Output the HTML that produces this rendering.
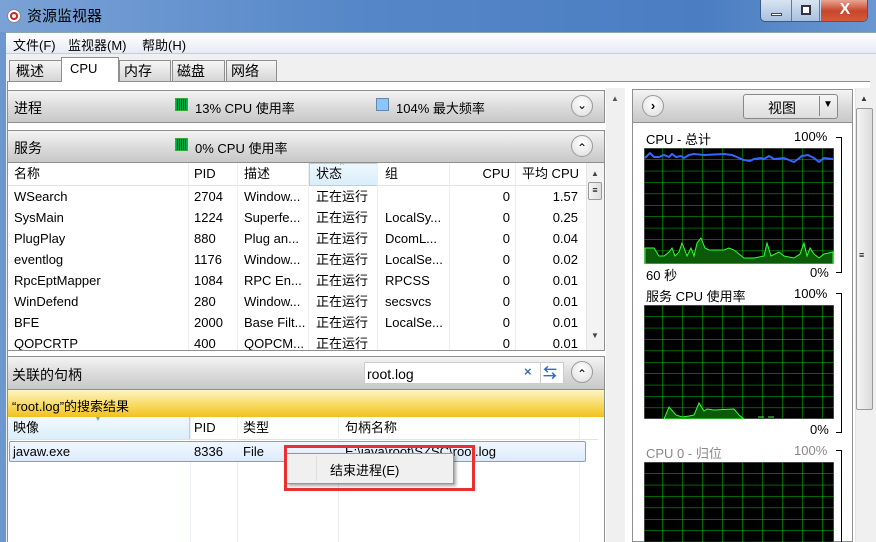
<!DOCTYPE html>
<html><head><meta charset="utf-8"><style>
*{margin:0;padding:0;box-sizing:border-box}
html,body{width:876px;height:542px;overflow:hidden}
body{position:relative;font-family:"Liberation Sans","Noto Sans CJK SC",sans-serif;font-size:13px;color:#000;background:#f0f0f0}
.a{position:absolute}
.hdr{background:linear-gradient(#f4f4f4,#dcdcdc 50%,#c8c8c8);border:1px solid #8e8f8f}
.circ{width:22px;height:22px;border-radius:50%;border:1px solid #9a9a9a;background:radial-gradient(circle at 50% 35%,#fff,#ddd);}
.t{white-space:nowrap}
.row{position:absolute;left:0;height:21px;line-height:21px;width:580px}
.row span{position:absolute}
.r{text-align:right}
</style></head><body>
<!-- title bar -->
<div class="a" style="left:0;top:0;width:876px;height:32px;background:linear-gradient(90deg,#7aa2d6,#5687c8 40%,#4a7dc2 80%,#6a97d0)"></div>
<div class="a" style="left:7px;top:9px;width:14px;height:14px;border-radius:50%;background:#fff;border:1px solid #888"><div class="a" style="left:2px;top:2px;width:8px;height:8px;border-radius:50%;border:2px solid #c22"></div></div>
<div class="a t" style="left:27px;top:5px;font-size:15px;color:#000">资源监视器</div>
<div class="a" style="left:760px;top:0;width:108px;height:22px;border:1px solid #3a5a8a;border-top:none;border-radius:0 0 5px 5px;background:linear-gradient(#d8e4f2,#a9c0de);overflow:hidden">
 <div class="a" style="left:0;top:0;width:31px;height:22px;border-right:1px solid #5a7aa8"><div class="a" style="left:10px;top:13px;width:11px;height:3px;background:#fff;border:1px solid #445"></div></div>
 <div class="a" style="left:31px;top:0;width:28px;height:22px;border-right:1px solid #5a7aa8"><div class="a" style="left:9px;top:5px;width:10px;height:10px;border:2px solid #334;background:#fff"></div></div>
 <div class="a" style="left:60px;top:0;width:48px;height:22px;background:linear-gradient(#e8a493,#c8452b 50%,#d85a3a);color:#fff;font-weight:bold;font-size:16px;text-align:center;line-height:20px">X</div>
</div>
<!-- window body frame -->
<div class="a" style="left:0;top:32px;width:6px;height:510px;background:#6d97cf"></div>
<div class="a" style="left:6px;top:32px;width:870px;height:510px;background:#f0f0f0;border-top:1px solid #8aa"></div>
<div class="a" style="left:6px;top:33px;width:870px;height:20px;background:linear-gradient(#fff,#e6ebf5)"></div>
<div class="a t" style="left:13px;top:35px">文件(F)</div>
<div class="a t" style="left:68px;top:35px">监视器(M)</div>
<div class="a t" style="left:142px;top:35px">帮助(H)</div>
<div class="a" style="left:6px;top:53px;width:870px;height:1px;background:#c8cdd6"></div>
<!-- tabs -->
<div class="a" style="left:7px;top:81px;width:863px;height:1px;background:#8e8f8f"></div>
<div class="a hdr t" style="left:9px;top:60px;width:53px;height:22px;padding:0 6px;line-height:20px;font-size:14px;background:linear-gradient(#f6f6f6,#d6d6d6)">概述</div>
<div class="a t" style="left:61px;top:57px;width:58px;height:26px;padding:3px 8px;background:#fff;border:1px solid #8e8f8f;border-bottom:none">CPU</div>
<div class="a hdr t" style="left:119px;top:60px;width:52px;height:22px;padding:0 4px;line-height:20px;font-size:14px;background:linear-gradient(#f6f6f6,#d6d6d6)">内存</div>
<div class="a hdr t" style="left:172px;top:60px;width:53px;height:22px;padding:0 4px;line-height:20px;font-size:14px;background:linear-gradient(#f6f6f6,#d6d6d6)">磁盘</div>
<div class="a hdr t" style="left:226px;top:60px;width:51px;height:22px;padding:0 4px;line-height:20px;font-size:14px;background:linear-gradient(#f6f6f6,#d6d6d6)">网络</div>
<div class="a" style="left:7px;top:82px;width:863px;height:460px;background:#fff;border-left:1px solid #8e8f8f"></div>

<!-- left panel -->
<div class="a hdr" style="left:7px;top:90px;width:598px;height:33px"></div>
<div class="a t" style="left:14px;top:98px;font-size:14px">进程</div>
<div class="a" style="left:175px;top:98px;width:13px;height:13px;background:repeating-linear-gradient(90deg,#0a4 0 1px,#050 1px 2px);border:1px solid #3a3"></div>
<div class="a t" style="left:195px;top:98px">13% CPU 使用率</div>
<div class="a" style="left:376px;top:98px;width:13px;height:13px;background:#8cc4ff;border:1px solid #68a"></div>
<div class="a t" style="left:396px;top:98px">104% 最大频率</div>
<div class="a circ" style="left:571px;top:95px;text-align:center;line-height:18px;font-size:12px">&#8964;</div>

<div class="a hdr" style="left:7px;top:130px;width:598px;height:33px"></div>
<div class="a t" style="left:14px;top:138px;font-size:14px">服务</div>
<div class="a" style="left:175px;top:138px;width:13px;height:13px;background:repeating-linear-gradient(90deg,#0a4 0 1px,#050 1px 2px);border:1px solid #3a3"></div>
<div class="a t" style="left:195px;top:138px">0% CPU 使用率</div>
<div class="a circ" style="left:571px;top:135px;text-align:center;line-height:24px;font-size:12px">&#8963;</div>

<!-- services table -->
<div class="a" style="left:7px;top:163px;width:598px;height:188px;background:#fff;border:1px solid #8e8f8f;border-top:none;overflow:hidden">
 <div class="a" style="left:0;top:0;width:590px;height:23px;border-bottom:1px solid #dfe3e8;background:#fff"></div>
 <div class="a" style="left:301px;top:0;width:69px;height:23px;background:linear-gradient(#eef7fd,#d9eef9);border:1px solid #a8d4ee"></div>
 <div class="a" style="left:332px;top:-2px;font-size:8px;color:#7aa">^</div>
 <div class="a" style="left:180px;top:0;width:1px;height:188px;background:#eee"></div>
 <div class="a" style="left:229px;top:0;width:1px;height:188px;background:#eee"></div>
 <div class="a" style="left:300px;top:0;width:1px;height:188px;background:#eee"></div>
 <div class="a" style="left:369px;top:0;width:1px;height:188px;background:#eee"></div>
 <div class="a" style="left:441px;top:0;width:1px;height:188px;background:#eee"></div>
 <div class="a" style="left:507px;top:0;width:1px;height:188px;background:#eee"></div>
 <div class="row" style="top:0px;color:#000"><span style="left:6px">名称</span><span style="left:186px">PID</span><span style="left:236px">描述</span><span style="left:308px">状态</span><span style="left:377px">组</span><span style="left:441px;width:61px" class="r">CPU</span><span style="left:505px;width:66px" class="r">平均 CPU</span></div>
 <div class="row" style="top:23px"><span style="left:6px">WSearch</span><span style="left:186px">2704</span><span style="left:236px">Window...</span><span style="left:308px">正在运行</span><span style="left:377px"></span><span style="left:441px;width:61px" class="r">0</span><span style="left:505px;width:65px" class="r">1.57</span></div>
 <div class="row" style="top:44px"><span style="left:6px">SysMain</span><span style="left:186px">1224</span><span style="left:236px">Superfe...</span><span style="left:308px">正在运行</span><span style="left:377px">LocalSy...</span><span style="left:441px;width:61px" class="r">0</span><span style="left:505px;width:65px" class="r">0.25</span></div>
 <div class="row" style="top:65px"><span style="left:6px">PlugPlay</span><span style="left:186px">880</span><span style="left:236px">Plug an...</span><span style="left:308px">正在运行</span><span style="left:377px">DcomL...</span><span style="left:441px;width:61px" class="r">0</span><span style="left:505px;width:65px" class="r">0.04</span></div>
 <div class="row" style="top:86px"><span style="left:6px">eventlog</span><span style="left:186px">1176</span><span style="left:236px">Window...</span><span style="left:308px">正在运行</span><span style="left:377px">LocalSe...</span><span style="left:441px;width:61px" class="r">0</span><span style="left:505px;width:65px" class="r">0.02</span></div>
 <div class="row" style="top:107px"><span style="left:6px">RpcEptMapper</span><span style="left:186px">1084</span><span style="left:236px">RPC En...</span><span style="left:308px">正在运行</span><span style="left:377px">RPCSS</span><span style="left:441px;width:61px" class="r">0</span><span style="left:505px;width:65px" class="r">0.01</span></div>
 <div class="row" style="top:128px"><span style="left:6px">WinDefend</span><span style="left:186px">280</span><span style="left:236px">Window...</span><span style="left:308px">正在运行</span><span style="left:377px">secsvcs</span><span style="left:441px;width:61px" class="r">0</span><span style="left:505px;width:65px" class="r">0.01</span></div>
 <div class="row" style="top:149px"><span style="left:6px">BFE</span><span style="left:186px">2000</span><span style="left:236px">Base Filt...</span><span style="left:308px">正在运行</span><span style="left:377px">LocalSe...</span><span style="left:441px;width:61px" class="r">0</span><span style="left:505px;width:65px" class="r">0.01</span></div>
 <div class="row" style="top:170px"><span style="left:6px">QOPCRTP</span><span style="left:186px">400</span><span style="left:236px">QOPCM...</span><span style="left:308px">正在运行</span><span style="left:441px;width:61px" class="r">0</span><span style="left:505px;width:65px" class="r">0.01</span></div>
 <div class="a" style="left:578px;top:0;width:18px;height:188px;background:#f3f3f3;border-left:1px solid #e4e4e4"></div>
 <div class="a" style="left:583px;top:6px;font-size:8px;color:#444">&#9650;</div>
 <div class="a" style="left:580px;top:19px;width:14px;height:18px;border:1px solid #999;border-radius:2px;background:linear-gradient(90deg,#f4f4f4,#ddd);font-size:9px;text-align:center;line-height:15px">≡</div>
 <div class="a" style="left:583px;top:168px;font-size:8px;color:#444">&#9660;</div>
</div>

<!-- handles -->
<div class="a hdr" style="left:7px;top:356px;width:598px;height:34px"></div>
<div class="a t" style="left:12px;top:365px;font-size:14px">关联的句柄</div>
<div class="a" style="left:364px;top:362px;width:200px;height:22px;background:#fff;border:1px solid #ccc"></div>
<div class="a t" style="left:367px;top:366px;font-size:14px">root.log</div>
<div class="a" style="left:524px;top:364px;color:#3d6fb0;font-weight:bold">×</div>
<div class="a" style="left:540px;top:363px;width:1px;height:20px;background:#ccc"></div>
<div class="a" style="left:543px;top:363px;color:#2a6fc0;font-weight:bold;font-size:14px">⇆</div>
<div class="a circ" style="left:571px;top:361px;text-align:center;line-height:24px;font-size:12px">&#8963;</div>
<div class="a" style="left:7px;top:390px;width:598px;height:27px;background:linear-gradient(#fdf3c4,#f8d85a 60%,#f0c020);border-left:1px solid #8e8f8f;border-right:1px solid #8e8f8f"></div>
<div class="a t" style="left:12px;top:396px">“root.log”的搜索结果</div>
<div class="a" style="left:7px;top:417px;width:598px;height:125px;background:#fff;border-left:1px solid #8e8f8f;border-right:1px solid #8e8f8f;overflow:hidden">
 <div class="a" style="left:0;top:0;width:182px;height:23px;background:linear-gradient(#f2f8fd,#d9eef9);border-right:1px solid #a8d4ee"></div>
 <div class="a" style="left:0;top:22px;width:590px;height:1px;background:#dfe3e8"></div>
 <div class="a" style="left:86px;top:-3px;font-size:8px;color:#7aa">▼</div>
 <div class="a" style="left:182px;top:0;width:1px;height:125px;background:#eaf0f6"></div>
 <div class="a" style="left:229px;top:0;width:1px;height:125px;background:#eaf0f6"></div>
 <div class="a" style="left:330px;top:0;width:1px;height:125px;background:#eaf0f6"></div>
 <div class="a" style="left:571px;top:0;width:1px;height:125px;background:#eaf0f6"></div>
 <div class="row" style="top:0px"><span style="left:5px">映像</span><span style="left:186px">PID</span><span style="left:235px">类型</span><span style="left:337px">句柄名称</span></div>
 <div class="a" style="left:1px;top:24px;width:577px;height:21px;background:linear-gradient(#f1f7fe,#dcebfc);border:1px solid #7da2ce;border-radius:2px"></div>
 <div class="row" style="top:24px"><span style="left:5px">javaw.exe</span><span style="left:186px">8336</span><span style="left:235px">File</span><span style="left:337px">E:\java\root\SZSC\root.log</span></div>
</div>
<!-- context menu -->
<div class="a" style="left:286px;top:453px;width:168px;height:31px;background:#f0f0f0;border:1px solid #979797;box-shadow:2px 2px 3px rgba(0,0,0,.35)"></div>
<div class="a" style="left:316px;top:456px;width:1px;height:25px;background:#e0e0e0"></div>
<div class="a t" style="left:330px;top:460px">结束进程(E)</div>
<div class="a" style="left:284px;top:445px;width:191px;height:46px;border:3px solid #e83030"></div>

<!-- middle scrollbar -->
<div class="a" style="left:606px;top:88px;width:19px;height:454px;background:#f0f0f0"></div>
<div class="a" style="left:611px;top:94px;font-size:8px;color:#555">&#9650;</div>

<!-- right panel -->
<div class="a" style="left:632px;top:89px;width:221px;height:453px;background:#fff;border:1px solid #8e8f8f"></div>
<div class="a hdr" style="left:632px;top:89px;width:221px;height:34px"></div>
<div class="a circ" style="left:642px;top:95px;text-align:center;line-height:20px;font-weight:bold;font-size:13px">›</div>
<div class="a" style="left:743px;top:94px;width:95px;height:25px;border:1px solid #888;border-radius:3px;background:linear-gradient(#f6f6f6,#ddd)"></div>
<div class="a t" style="left:768px;top:98px;font-size:14px">视图</div>
<div class="a" style="left:819px;top:96px;width:1px;height:20px;background:#888"></div>
<div class="a" style="left:823px;top:99px;font-size:10px">&#9660;</div>

<div class="a t" style="left:646px;top:129px">CPU - 总计</div>
<div class="a t" style="left:794px;top:129px">100%</div>
<div class="a" style="left:836px;top:137px;width:6px;height:136px;border:1px solid #000;border-left:none"></div>
<svg class="a" style="left:644px;top:148px" width="190" height="116">
 <defs><pattern id="g" width="20" height="11.4" patternUnits="userSpaceOnUse" x="-2"><rect width="20" height="11.4" fill="#000"/><path d="M0 0V11.4M0 0H20" stroke="#0c0" stroke-width="1"/></pattern></defs>
 <rect x="0" y="0" width="190" height="116" fill="url(#g)" stroke="#888"/>
 <path d="M1 116 L1 100 L10 100 L15 108 L20 108 L25 104 L28 100 L31 108 L35 104 L38 95 L40 100 L43 108 L47 100 L50 108 L53 95 L57 90 L61 100 L65 102 L80 102 L85 100 L90 102 L95 106 L100 110 L110 110 L120 108 L123 95 L127 108 L135 104 L140 108 L150 110 L156 106 L160 95 L163 108 L166 100 L170 106 L175 110 L180 106 L189 104 L189 116Z" fill="#0a5a0a" stroke="#3f3" stroke-width="1"/>
 <path d="M1 10 L6 5 L10 9 L15 9 L20 7 L25 9 L28 6 L32 9 L37 8 L40 10 L45 7 L50 6 L60 7 L80 6 L88 7 L95 10 L100 12 L106 13 L110 11 L117 10 L120 11 L125 8 L130 11 L140 10 L145 12 L150 14 L158 8 L164 7 L170 10 L175 14 L180 10 L189 11" fill="none" stroke="#36f" stroke-width="2"/>
</svg>
<div class="a t" style="left:646px;top:265px">60 秒</div>
<div class="a t" style="left:810px;top:265px">0%</div>

<div class="a t" style="left:646px;top:286px">服务 CPU 使用率</div>
<div class="a t" style="left:794px;top:286px">100%</div>
<div class="a" style="left:836px;top:293px;width:6px;height:140px;border:1px solid #000;border-left:none"></div>
<svg class="a" style="left:644px;top:305px" width="190" height="114">
 <rect x="0" y="0" width="190" height="114" fill="url(#g)" stroke="#888"/>
 <path d="M20 114 L25 102 L32 110 L38 112 L45 111 L50 110 L55 98 L60 106 L63 104 L70 105 L90 104 L95 110 L100 114Z" fill="#0a5a0a" stroke="#3f3"/>
 <path d="M114 112 H120 M124 112 H130" stroke="#3f3"/>
</svg>
<div class="a t" style="left:810px;top:422px">0%</div>

<div class="a t" style="left:646px;top:443px;color:#888">CPU 0 - 归位</div>
<div class="a t" style="left:794px;top:443px;color:#888">100%</div>
<div class="a" style="left:836px;top:450px;width:6px;height:100px;border:1px solid #000;border-left:none;border-bottom:none"></div>
<svg class="a" style="left:644px;top:462px" width="190" height="80">
 <rect x="0" y="0" width="190" height="90" fill="url(#g)" stroke="#888"/>
</svg>

<!-- right scrollbar -->
<div class="a" style="left:855px;top:88px;width:19px;height:454px;background:#f0f0f0;border-left:1px solid #e4e4e4"></div>
<div class="a" style="left:860px;top:94px;font-size:8px;color:#333">&#9650;</div>
<div class="a" style="left:856px;top:108px;width:17px;height:302px;border:1px solid #999;border-radius:2px;background:linear-gradient(90deg,#f4f4f4,#dcdcdc)"></div>
<div class="a" style="left:859px;top:250px;font-size:9px">≡</div>
</body></html>
